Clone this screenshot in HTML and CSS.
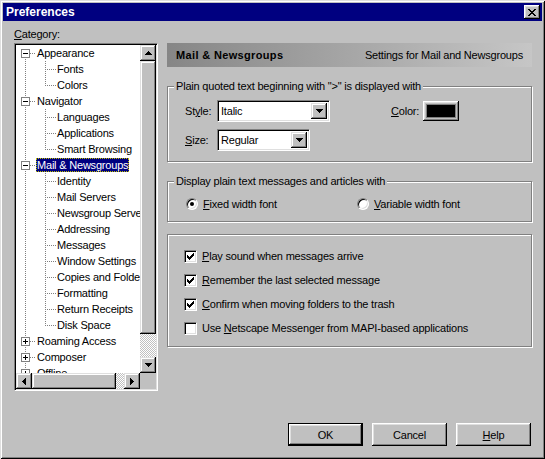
FILE: index.html
```html
<!DOCTYPE html>
<html lang="en">
<head>
    <meta charset="UTF-8">
    <title>Preferences</title>
    <link rel="stylesheet" href="styles.css">
</head>
<body>
    <div class="dialog">
        <!-- title bar -->
        <div class="titlebar">
            <span class="title">Preferences</span>
            <span class="close-btn">
                <svg width="8" height="7" viewBox="0 0 8 7"><path d="M0 0h2v1h1v1h2V1h1V0h2v1H7v1H6v1H5v1h1v1h1v1h1v1H6V6H5V5H3v1H2v1H0V6h1V5h1V4h1V3H2V2H1V1H0z"/></svg>
            </span>
        </div>

        <div class="main">
            <div class="cat-label"><u>C</u>ategory:</div>

            <!-- category tree -->
            <div class="tree-box">
                <div class="tree-view">
                    <ul class="tree">
                        <li class="node">
                            <div class="row"><svg class="exp" width="9" height="9"><rect x=".5" y=".5" width="8" height="8" fill="#fff" stroke="#808080"/><path d="M2 4.5h5" stroke="#000"/></svg><span class="label">Appearance</span></div>
                            <ul>
                                <li><div class="row"><span class="label">Fonts</span></div></li>
                                <li><div class="row"><span class="label">Colors</span></div></li>
                            </ul>
                        </li>
                        <li class="node">
                            <div class="row"><svg class="exp" width="9" height="9"><rect x=".5" y=".5" width="8" height="8" fill="#fff" stroke="#808080"/><path d="M2 4.5h5" stroke="#000"/></svg><span class="label">Navigator</span></div>
                            <ul>
                                <li><div class="row"><span class="label">Languages</span></div></li>
                                <li><div class="row"><span class="label">Applications</span></div></li>
                                <li><div class="row"><span class="label">Smart Browsing</span></div></li>
                            </ul>
                        </li>
                        <li class="node">
                            <div class="row"><svg class="exp" width="9" height="9"><rect x=".5" y=".5" width="8" height="8" fill="#fff" stroke="#808080"/><path d="M2 4.5h5" stroke="#000"/></svg><span class="label selected">Mail &amp; Newsgroups</span></div>
                            <ul>
                                <li><div class="row"><span class="label">Identity</span></div></li>
                                <li><div class="row"><span class="label">Mail Servers</span></div></li>
                                <li><div class="row"><span class="label">Newsgroup Servers</span></div></li>
                                <li><div class="row"><span class="label">Addressing</span></div></li>
                                <li><div class="row"><span class="label">Messages</span></div></li>
                                <li><div class="row"><span class="label">Window Settings</span></div></li>
                                <li><div class="row"><span class="label">Copies and Folders</span></div></li>
                                <li><div class="row"><span class="label">Formatting</span></div></li>
                                <li><div class="row"><span class="label">Return Receipts</span></div></li>
                                <li><div class="row"><span class="label">Disk Space</span></div></li>
                            </ul>
                        </li>
                        <li class="node">
                            <div class="row"><svg class="exp" width="9" height="9"><rect x=".5" y=".5" width="8" height="8" fill="#fff" stroke="#808080"/><path d="M2 4.5h5M4.5 2v5" stroke="#000"/></svg><span class="label">Roaming Access</span></div>
                        </li>
                        <li class="node">
                            <div class="row"><svg class="exp" width="9" height="9"><rect x=".5" y=".5" width="8" height="8" fill="#fff" stroke="#808080"/><path d="M2 4.5h5M4.5 2v5" stroke="#000"/></svg><span class="label">Composer</span></div>
                        </li>
                        <li class="node">
                            <div class="row"><svg class="exp" width="9" height="9"><rect x=".5" y=".5" width="8" height="8" fill="#fff" stroke="#808080"/><path d="M2 4.5h5M4.5 2v5" stroke="#000"/></svg><span class="label">Offline</span></div>
                        </li>
                        <li class="node">
                            <div class="row"><svg class="exp" width="9" height="9"><rect x=".5" y=".5" width="8" height="8" fill="#fff" stroke="#808080"/><path d="M2 4.5h5M4.5 2v5" stroke="#000"/></svg><span class="label">Advanced</span></div>
                        </li>
                    </ul>
                </div>
                <div class="vscroll">
                    <span class="sb-btn"><svg width="7" height="4"><path d="M3 0h1v1h1v1h1v1h1v1H0V3h1V2h1V1h1z"/></svg></span>
                    <span class="sb-thumb v-thumb"></span>
                    <span class="sb-track"></span>
                    <span class="sb-btn"><svg width="7" height="4"><path d="M0 0h7v1H6v1H5v1H4v1H3V3H2V2H1V1H0z"/></svg></span>
                </div>
                <div class="hscroll">
                    <span class="sb-btn"><svg width="4" height="7"><path d="M3 0h1v7H3V6H2V5H1V4H0V3h1V2h1V1h1z"/></svg></span>
                    <span class="sb-thumb h-thumb"></span>
                    <span class="sb-track"></span>
                    <span class="sb-btn"><svg width="4" height="7"><path d="M0 0h1v1h1v1h1v1h1v1H3v1H2v1H1v1H0z"/></svg></span>
                </div>
                <div class="sb-corner"></div>
            </div>

            <!-- settings panel -->
            <div class="panel">
                <div class="panel-head">
                    <span class="panel-title">Mail &amp; Newsgroups</span>
                    <span class="panel-desc">Settings for Mail and Newsgroups</span>
                </div>

                <div class="group quoted">
                    <div class="group-title">Plain quoted text beginning with "&gt;" is displayed with</div>
                    <div class="field-row">
                        <span class="field-label">St<u>y</u>le:</span>
                        <div class="select style-select">
                            <span class="select-value">Italic</span>
                            <span class="drop-btn"><svg width="7" height="4"><path d="M0 0h7v1H6v1H5v1H4v1H3V3H2V2H1V1H0z"/></svg></span>
                        </div>
                        <span class="field-label color-label"><u>C</u>olor:</span>
                        <span class="color-btn"><span class="swatch"></span></span>
                    </div>
                    <div class="field-row">
                        <span class="field-label"><u>S</u>ize:</span>
                        <div class="select size-select">
                            <span class="select-value">Regular</span>
                            <span class="drop-btn"><svg width="7" height="4"><path d="M0 0h7v1H6v1H5v1H4v1H3V3H2V2H1V1H0z"/></svg></span>
                        </div>
                    </div>
                </div>

                <div class="group plain">
                    <div class="group-title">Display plain text messages and articles with</div>
                    <div class="radio-row">
                        <label class="radio-opt"><span class="radio checked"></span><span><u>F</u>ixed width font</span></label>
                        <label class="radio-opt"><span class="radio"></span><span><u>V</u>ariable width font</span></label>
                    </div>
                </div>

                <div class="group checks">
                    <label class="check-row"><span class="check"><svg width="7" height="7"><path d="M0 2h1v1h1v1h1V3h1V2h1V1h1V0h1v3H6v1H5v1H4v1H3v1H2V6H1V5H0z"/></svg></span><span><u>P</u>lay sound when messages arrive</span></label>
                    <label class="check-row"><span class="check"><svg width="7" height="7"><path d="M0 2h1v1h1v1h1V3h1V2h1V1h1V0h1v3H6v1H5v1H4v1H3v1H2V6H1V5H0z"/></svg></span><span><u>R</u>emember the last selected message</span></label>
                    <label class="check-row"><span class="check"><svg width="7" height="7"><path d="M0 2h1v1h1v1h1V3h1V2h1V1h1V0h1v3H6v1H5v1H4v1H3v1H2V6H1V5H0z"/></svg></span><span><u>C</u>onfirm when moving folders to the trash</span></label>
                    <label class="check-row"><span class="check"></span><span>Use <u>N</u>etscape Messenger from MAPI-based applications</span></label>
                </div>
            </div>
        </div>

        <div class="buttons">
            <button class="btn default">OK</button>
            <button class="btn">Cancel</button>
            <button class="btn"><u>H</u>elp</button>
        </div>
    </div>
</body>
</html>
```

FILE: styles.css
```css
* {
    box-sizing: border-box;
}
body {
    margin: 0;
    background: #c0c0c0;
    font: 11px "Liberation Sans", Arial, sans-serif;
    letter-spacing: -0.2px;
    color: #000;
}
u {
    text-decoration-thickness: 1px;
    text-underline-offset: 1px;
}

/* dialog frame */
.dialog {
    width: 545px;
    height: 459px;
    padding: 3px;
    display: flex;
    flex-direction: column;
    background: #c0c0c0;
    box-shadow: inset 1px 1px #dfdfdf, inset -1px -1px #000, inset 2px 2px #fff, inset -2px -2px #808080;
}
.titlebar {
    height: 18px;
    display: flex;
    align-items: center;
    justify-content: space-between;
    padding: 0 2px 0 3px;
    background: #000080;
    color: #fff;
}
.title {
    font-weight: bold;
    font-size: 12px;
    letter-spacing: 0;
}
.close-btn {
    width: 16px;
    height: 14px;
    display: flex;
    align-items: center;
    justify-content: center;
    background: #c0c0c0;
    box-shadow: inset -1px -1px #000, inset 1px 1px #fff, inset -2px -2px #808080, inset 2px 2px #dfdfdf;
}

/* main area */
.main {
    display: grid;
    grid-template-columns: 144px 365px;
    column-gap: 9px;
    row-gap: 2px;
    padding: 7px 0 0 11px;
}
.cat-label {
    grid-column: 1 / 3;
    line-height: 13px;
}

/* tree */
.tree-box {
    width: 144px;
    height: 348px;
    display: grid;
    grid-template-columns: 124px 16px;
    grid-template-rows: 328px 16px;
    border: 1px solid;
    border-color: #808080 #fff #fff #808080;
    box-shadow: inset 1px 1px #000, inset -1px -1px #dfdfdf;
    padding: 1px;
}
.tree-view {
    background: #fff;
    overflow: hidden;
}
.tree, .tree ul {
    list-style: none;
    margin: 0;
    padding: 0;
}
.tree li {
    position: relative;
    white-space: nowrap;
}
.row {
    height: 16px;
    display: flex;
    align-items: center;
    position: relative;
}
.node > .row {
    padding-left: 20px;
}
.tree ul .row {
    padding-left: 40px;
}
.label {
    line-height: 14px;
    padding: 0 1px;
}
.label.selected {
    background: #000080;
    color: #fff;
    outline: 1px dotted #c0c000;
    outline-offset: -1px;
}
.exp {
    position: absolute;
    left: 5px;
    top: 4px;
    z-index: 1;
}
/* dotted tree lines */
.node::before {
    content: "";
    position: absolute;
    left: 9px;
    top: 0;
    bottom: 0;
    width: 1px;
    background: linear-gradient(#808080 1px, transparent 1px) 0 0 / 1px 2px;
}
.node:first-child::before {
    top: 8px;
}
.node > .row::after {
    content: "";
    position: absolute;
    left: 14px;
    top: 8px;
    width: 6px;
    height: 1px;
    background: linear-gradient(to right, #808080 1px, transparent 1px) 0 0 / 2px 1px;
}
.tree ul li::before {
    content: "";
    position: absolute;
    left: 29px;
    top: 0;
    bottom: 0;
    width: 1px;
    background: linear-gradient(#808080 1px, transparent 1px) 0 0 / 1px 2px;
}
.tree ul li:last-child::before {
    bottom: auto;
    height: 9px;
}
.tree ul li::after {
    content: "";
    position: absolute;
    left: 30px;
    top: 8px;
    width: 10px;
    height: 1px;
    background: linear-gradient(to right, #808080 1px, transparent 1px) 1px 0 / 2px 1px;
}

/* scrollbars */
.vscroll, .hscroll {
    display: flex;
}
.vscroll {
    flex-direction: column;
}
.sb-btn, .sb-thumb {
    display: flex;
    align-items: center;
    justify-content: center;
    background: #c0c0c0;
    box-shadow: inset -1px -1px #000, inset 1px 1px #dfdfdf, inset -2px -2px #808080, inset 2px 2px #fff;
}
.sb-btn {
    width: 16px;
    height: 16px;
    flex: none;
}
.v-thumb {
    height: 273px;
}
.h-thumb {
    width: 84px;
}
.sb-track {
    flex: 1;
    background: repeating-conic-gradient(#fff 0 25%, #c0c0c0 0 50%) 0 0 / 2px 2px;
}
.sb-corner {
    background: #c0c0c0;
}

/* right panel */
.panel {
    display: flex;
    flex-direction: column;
}
.panel-head {
    height: 24px;
    display: flex;
    align-items: center;
    justify-content: space-between;
    padding: 0 9px;
    background: linear-gradient(to right, #868686, #c6c6c6);
}
.panel-title {
    font-weight: bold;
    letter-spacing: 0.35px;
}
.group {
    border: 1px solid #808080;
    box-shadow: inset 1px 1px #fff, 1px 1px #fff;
}
.group-title {
    display: table;
    margin: -7px 0 0 6px;
    padding: 0 2px;
    line-height: 13px;
    background: #c0c0c0;
}
.quoted {
    margin-top: 19px;
    padding-bottom: 10px;
}
.field-row {
    display: flex;
    align-items: center;
    height: 22px;
    margin-top: 7px;
    padding-left: 17px;
}
.field-label {
    width: 32px;
}
.color-label {
    margin-left: 61px;
}
.select {
    height: 22px;
    display: flex;
    align-items: center;
    justify-content: space-between;
    padding: 2px;
    background: #fff;
    border: 1px solid;
    border-color: #808080 #fff #fff #808080;
    box-shadow: inset 1px 1px #000, inset -1px -1px #dfdfdf;
}
.style-select {
    width: 113px;
}
.size-select {
    width: 93px;
}
.select-value {
    padding-left: 1px;
}
.drop-btn {
    width: 16px;
    height: 16px;
    display: flex;
    align-items: center;
    justify-content: center;
    background: #c0c0c0;
    box-shadow: inset -1px -1px #000, inset 1px 1px #dfdfdf, inset -2px -2px #808080, inset 2px 2px #fff;
}
.color-btn {
    width: 36px;
    height: 20px;
    padding: 3px;
    background: #c0c0c0;
    box-shadow: inset -1px -1px #000, inset 1px 1px #fff, inset -2px -2px #808080, inset 2px 2px #dfdfdf;
}
.swatch {
    display: block;
    height: 100%;
    background: #000;
    border: 1px solid #808080;
}

.plain {
    margin-top: 19px;
    padding-bottom: 9px;
}
.radio-row {
    display: flex;
    height: 16px;
    margin-top: 8px;
    padding-left: 18px;
}
.radio-opt {
    width: 171px;
    display: flex;
    align-items: center;
    gap: 5px;
}
.radio {
    width: 12px;
    height: 12px;
    border-radius: 50%;
    background: #fff;
    border: 1px solid;
    border-color: #808080 #fff #fff #808080;
    box-shadow: inset 1px 1px #000, inset -1px -1px #dfdfdf;
    display: flex;
    align-items: center;
    justify-content: center;
}
.radio.checked::after {
    content: "";
    width: 4px;
    height: 4px;
    border-radius: 50%;
    background: #000;
}

.checks {
    margin-top: 12px;
    padding: 9px 0 6px 16px;
}
.check-row {
    height: 24px;
    display: flex;
    align-items: center;
    gap: 5px;
}
.check {
    width: 13px;
    height: 13px;
    display: flex;
    align-items: center;
    justify-content: center;
    background: #fff;
    border: 1px solid;
    border-color: #808080 #fff #fff #808080;
    box-shadow: inset 1px 1px #000, inset -1px -1px #dfdfdf;
}

/* bottom buttons */
.buttons {
    margin-top: auto;
    display: flex;
    justify-content: flex-end;
    gap: 9px;
    padding: 0 11px 10px 0;
}
.btn {
    width: 75px;
    height: 23px;
    padding: 0;
    font: inherit;
    letter-spacing: inherit;
    color: #000;
    background: #c0c0c0;
    border: none;
    box-shadow: inset -1px -1px #000, inset 1px 1px #fff, inset -2px -2px #808080, inset 2px 2px #dfdfdf;
}
.btn.default {
    border: 1px solid #000;
}
```
